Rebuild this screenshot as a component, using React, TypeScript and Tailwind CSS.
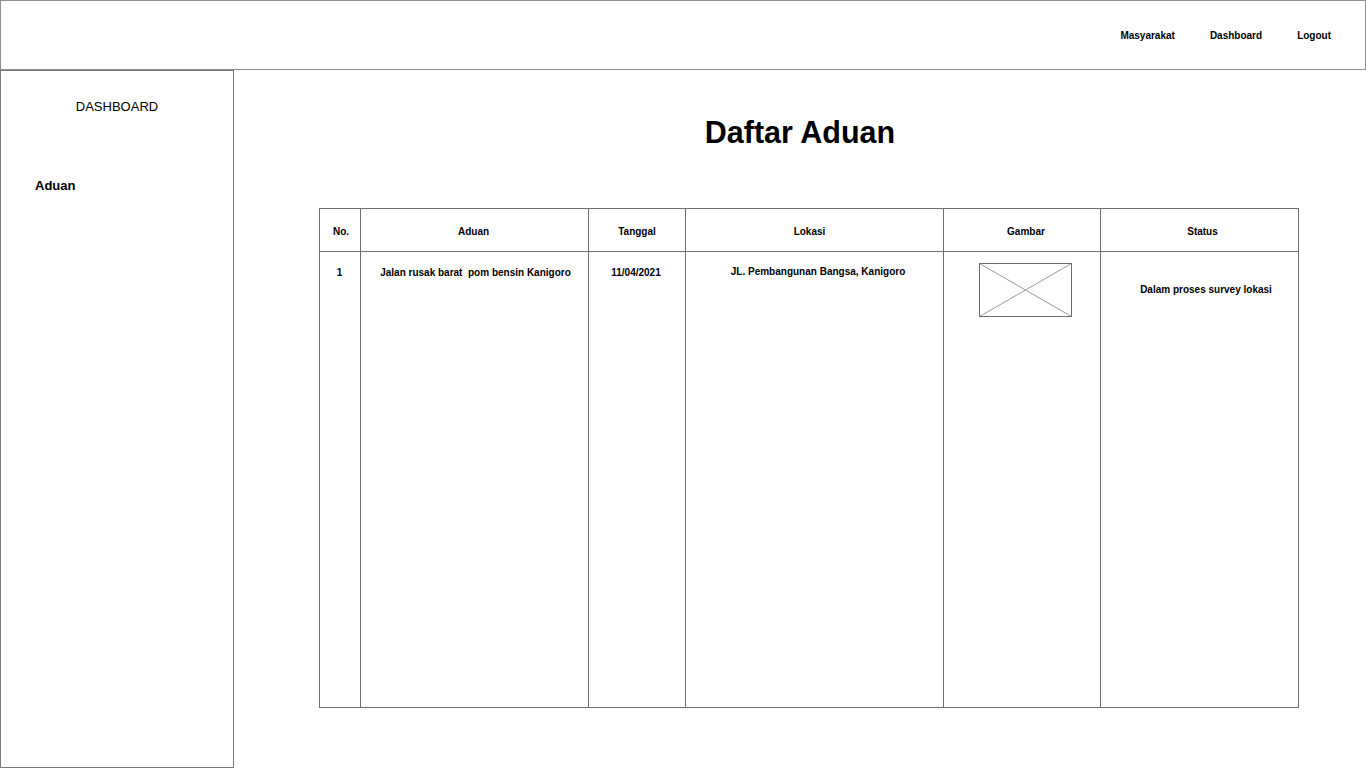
import React from "react";

const columns = [
  { label: "No.", cls: "w-[41px] pl-[2px]" },
  { label: "Aduan", cls: "w-[228px] pr-[2px]" },
  { label: "Tanggal", cls: "w-[97px]" },
  { label: "Lokasi", cls: "w-[258px] pr-[10px]" },
  { label: "Gambar", cls: "w-[157px] pl-[8px]" },
  { label: "Status", cls: "w-[197px] pl-[6px]" },
];

function ImagePlaceholder() {
  return (
    <svg width="93" height="54" viewBox="0 0 93 54" className="block">
      <line x1="0.5" y1="0.5" x2="92.5" y2="53.5" stroke="#9a9a9a" strokeWidth="1" />
      <line x1="92.5" y1="0.5" x2="0.5" y2="53.5" stroke="#9a9a9a" strokeWidth="1" />
      <rect x="0.5" y="0.5" width="92" height="53" fill="none" stroke="#6b6b6b" strokeWidth="1" />
    </svg>
  );
}

export default function App() {
  return (
    <div className="w-[1366px] h-[768px] overflow-hidden bg-white text-black font-['Liberation_Sans',Arial,sans-serif]">
      {/* Top bar */}
      <header className="h-[70px] border border-[#8f8f8f] flex items-center justify-end gap-[35px] pr-[34px]">
        <span className="text-[10px] font-bold">Masyarakat</span>
        <span className="text-[10px] font-bold">Dashboard</span>
        <span className="text-[10px] font-bold">Logout</span>
      </header>

      <div className="flex">
        {/* Sidebar */}
        <aside className="w-[234px] h-[698px] border border-[#7a7a7a] flex flex-col">
          <div className="pt-[28px] text-center text-[13px] leading-[16px]">DASHBOARD</div>
          <div className="mt-[63px] pl-[34px] text-[13px] leading-[16px] font-bold">Aduan</div>
        </aside>

        {/* Main */}
        <main className="flex-1 flex flex-col">
          <h1 className="mt-[47px] text-center text-[30.5px] leading-[30px] font-bold">Daftar Aduan</h1>

          <div className="mt-[61px] ml-[85px] w-[980px] h-[500px] border border-[#6f6f6f] flex flex-col">
            {/* Header row */}
            <div className="flex h-[43px] border-b border-[#6f6f6f]">
              {columns.map((c, i) => (
                <div
                  key={c.label}
                  className={`${c.cls} flex items-center justify-center pt-[2px] text-[10px] font-bold ${
                    i < columns.length - 1 ? "border-r border-[#6f6f6f]" : ""
                  }`}
                >
                  {c.label}
                </div>
              ))}
            </div>

            {/* Data row */}
            <div className="flex flex-1 text-[10px] leading-[12px] font-bold">
              <div className="w-[41px] border-r border-[#6f6f6f] pt-[15px] pr-[1px] text-center">1</div>
              <div className="w-[228px] border-r border-[#6f6f6f] pt-[15px] pl-[2px] text-center whitespace-pre">
                Jalan rusak barat  pom bensin Kanigoro
              </div>
              <div className="w-[97px] border-r border-[#6f6f6f] pt-[15px] pr-[2px] text-center">11/04/2021</div>
              <div className="w-[258px] border-r border-[#6f6f6f] pt-[14px] pl-[7px] text-center">
                JL. Pembangunan Bangsa, Kanigoro
              </div>
              <div className="w-[157px] border-r border-[#6f6f6f] pt-[11px] pl-[35px]">
                <ImagePlaceholder />
              </div>
              <div className="w-[197px] pt-[32px] pl-[13px] text-center">Dalam proses survey lokasi</div>
            </div>
          </div>
        </main>
      </div>
    </div>
  );
}
